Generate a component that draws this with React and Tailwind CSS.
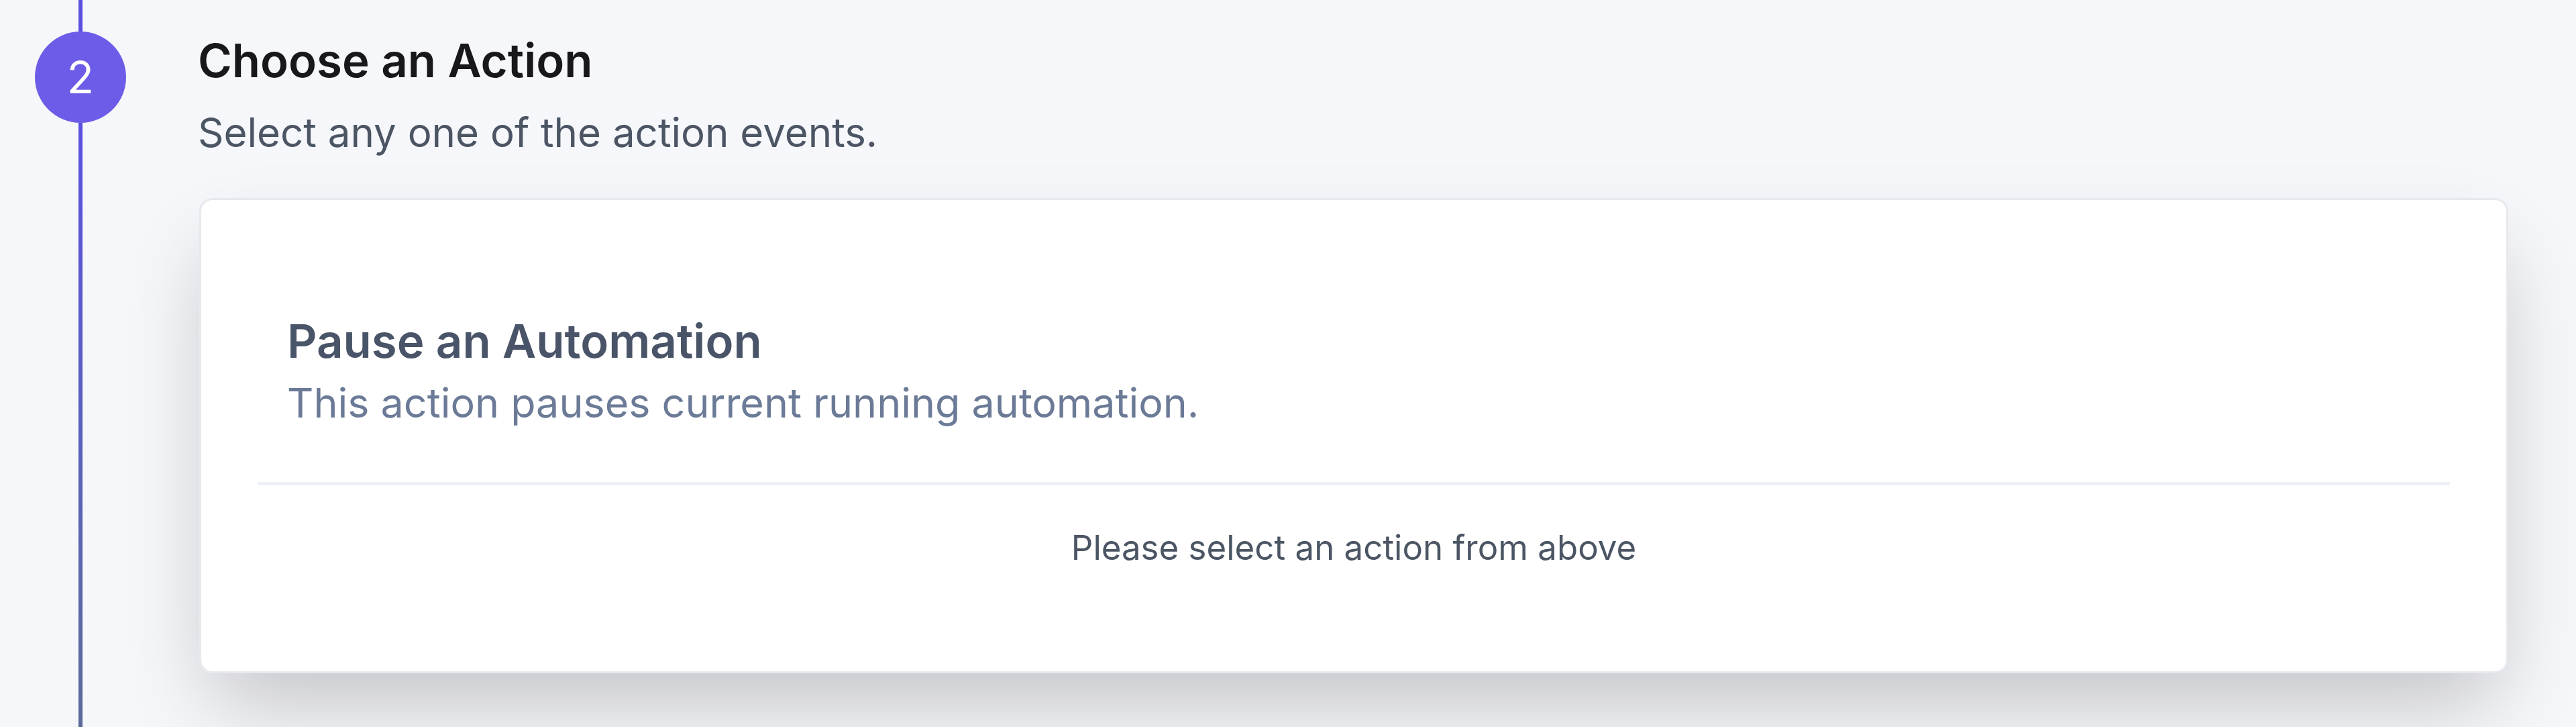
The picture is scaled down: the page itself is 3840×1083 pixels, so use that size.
import React from 'react';

// Step 2 of the automation builder: pick an action event
const actions = [
  {
    id: 'pause-automation',
    title: 'Pause an Automation',
    description: 'This action pauses current running automation.',
  },
];

const StepRail = ({ number }) => (
  <div className="w-[240px] shrink-0 flex flex-col items-center">
    <div className="w-[6px] h-[47px] bg-[#5b4fe0]" />
    <div className="w-[136px] h-[136px] shrink-0 rounded-full bg-[#6c5ce7] flex items-center justify-center text-white text-[66px] font-normal leading-none">
      {number}
    </div>
    <div className="w-[6px] flex-1 bg-gradient-to-b from-[#5b4fe0] to-[#5b6a98]" />
  </div>
);

const ActionOption = ({ title, description }) => (
  <div className="pl-[44px]">
    <h3 className="text-[69px] leading-[84px] font-semibold text-[#4a5468]">{title}</h3>
    <p className="mt-[13px] text-[61px] leading-[74px] text-[#6b7a96]">{description}</p>
  </div>
);

export default function App() {
  return (
    <div
      className="min-h-screen h-[1083px] overflow-hidden bg-[#f6f7fb] flex"
      style={{ fontFamily: 'Inter, "Noto Sans", sans-serif' }}
    >
      <StepRail number={2} />

      <div className="flex-1 ml-[55px] mr-[101px] pt-[48px]">
        <h2 className="text-[69px] leading-[84px] font-semibold text-[#18181b]">Choose an Action</h2>
        <p className="mt-[29px] text-[60px] leading-[72px] text-[#4b5563]">
          Select any one of the action events.
        </p>

        <div className="mt-[62px] ml-[2px] h-[708px] bg-white border-[3px] border-[#e8e9ee] rounded-[20px] shadow-[0_60px_120px_-20px_rgba(0,0,0,0.22)] px-[84px] pt-[168px]">
          {actions.map((a) => (
            <ActionOption key={a.id} title={a.title} description={a.description} />
          ))}
          <div className="mt-[81px] h-[5px] bg-[#edf0f5]" />
          <p className="mt-[62px] text-center text-[51px] leading-[62px] text-[#4b5563]">
            Please select an action from above
          </p>
        </div>
      </div>
    </div>
  );
}
